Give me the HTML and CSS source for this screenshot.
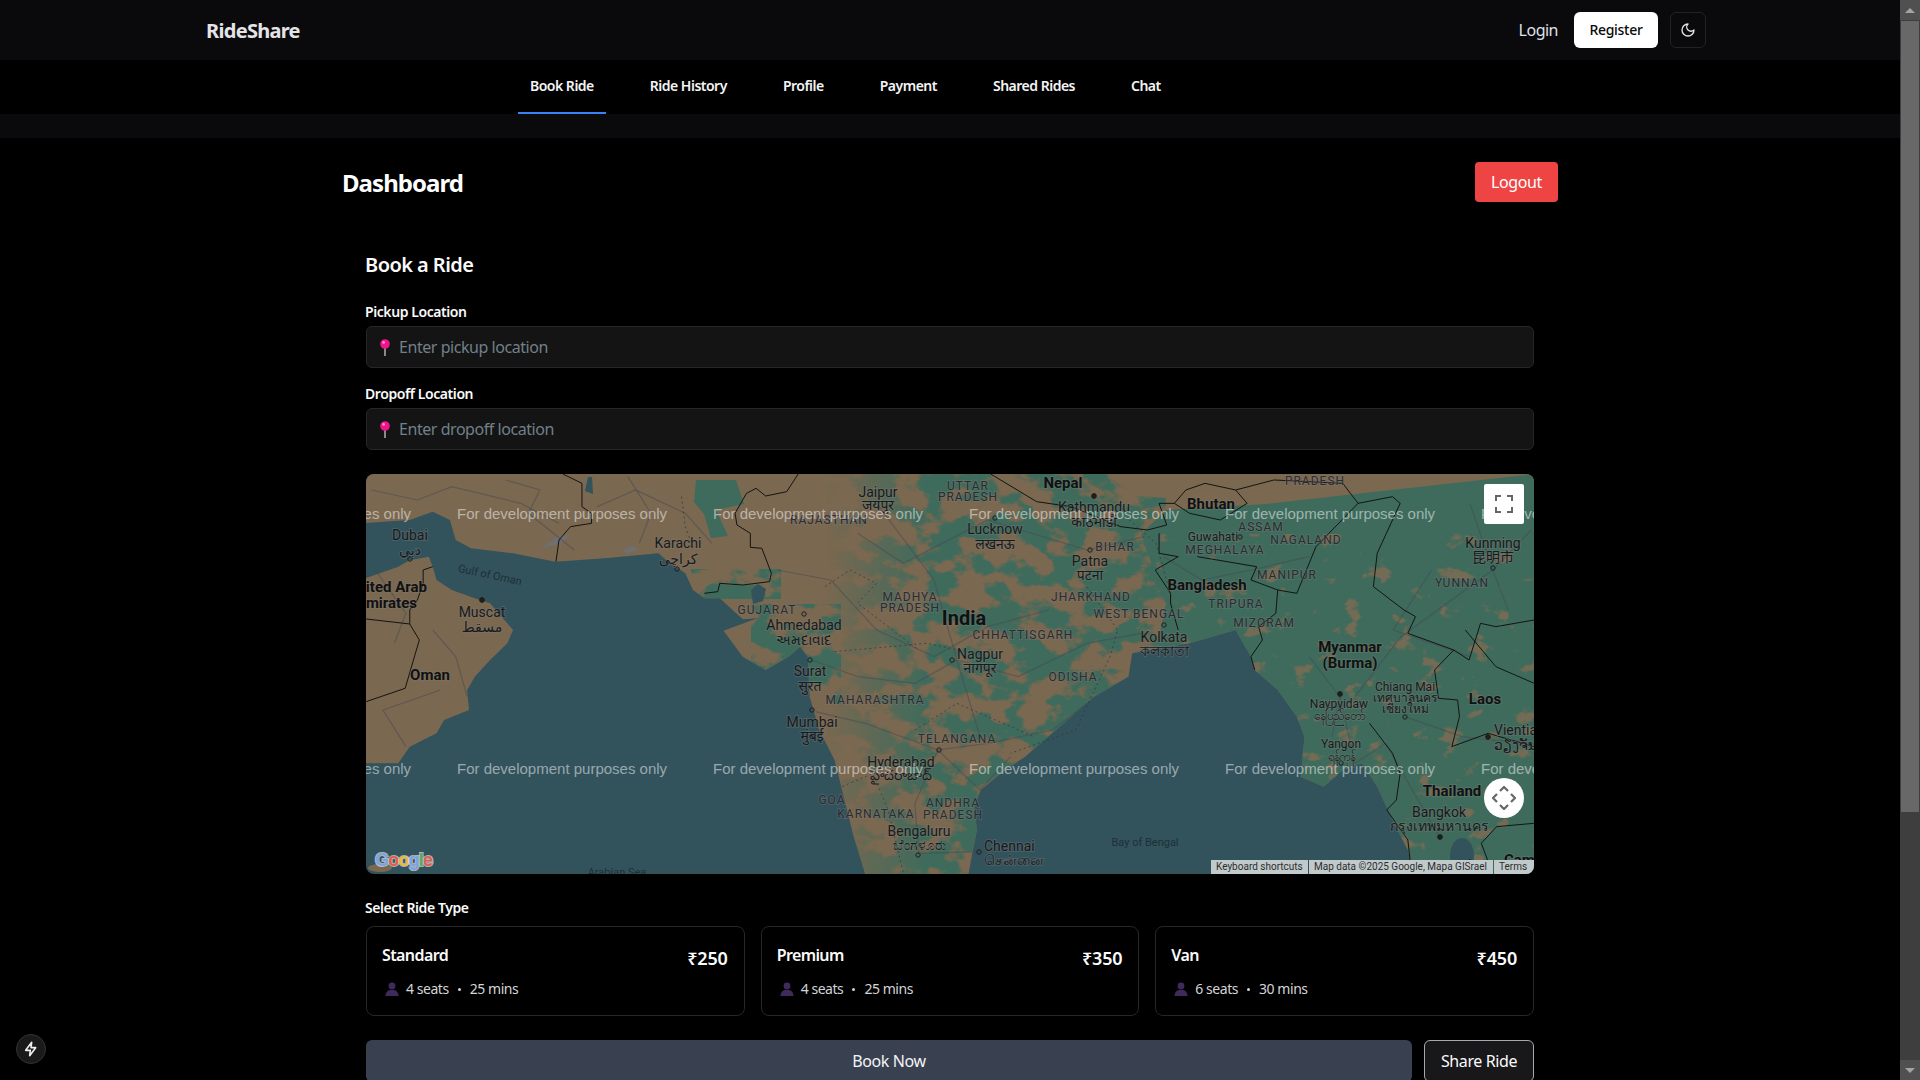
FILE: index.html
```html
<!DOCTYPE html>
<html lang="en">
<head>
    <meta charset="UTF-8">
    <meta name="viewport" content="width=device-width, initial-scale=1.0">
    <title>RideShare</title>
    <link rel="stylesheet" href="styles.css">
</head>
<body>
<div class="window">
    <div class="page">
        <header class="topbar">
            <span class="brand">RideShare</span>
            <div class="topbar-actions">
                <a class="login-link">Login</a>
                <button class="register-btn">Register</button>
                <button class="theme-btn">
                    <svg width="16" height="16" viewBox="0 0 24 24" fill="none" stroke="#e5e5e5" stroke-width="2" stroke-linecap="round" stroke-linejoin="round"><path d="M12 3a6 6 0 0 0 9 9 9 9 0 1 1-9-9Z"/></svg>
                </button>
            </div>
        </header>

        <nav class="tabs">
            <a class="tab active">Book Ride</a>
            <a class="tab">Ride History</a>
            <a class="tab">Profile</a>
            <a class="tab">Payment</a>
            <a class="tab">Shared Rides</a>
            <a class="tab">Chat</a>
        </nav>
        <div class="strip"></div>

        <main class="main">
            <div class="main-head">
                <h1>Dashboard</h1>
                <button class="logout-btn">Logout</button>
            </div>

            <section class="card">
                <h2>Book a Ride</h2>

                <label class="field-label">Pickup Location</label>
                <div class="input-box">
                    <svg class="pin" width="12" height="17" viewBox="0 0 12 17"><rect x="5.4" y="7" width="1.2" height="10" fill="#d8d8d8"/><circle cx="6" cy="5" r="4.8" fill="#f0148c"/><circle cx="4.6" cy="3.4" r="1.3" fill="#ff9ccf"/></svg>
                    <span class="placeholder">Enter pickup location</span>
                </div>

                <label class="field-label">Dropoff Location</label>
                <div class="input-box">
                    <svg class="pin" width="12" height="17" viewBox="0 0 12 17"><rect x="5.4" y="7" width="1.2" height="10" fill="#d8d8d8"/><circle cx="6" cy="5" r="4.8" fill="#f0148c"/><circle cx="4.6" cy="3.4" r="1.3" fill="#ff9ccf"/></svg>
                    <span class="placeholder">Enter dropoff location</span>
                </div>

                <div class="map">
                    <svg class="map-svg" width="1168" height="400" viewBox="0 0 1168 400">
                        <defs>
                            <path id="landShape" d="M0 0L0 160L130 150L190 125L235 150L250 210L290 235L400 250L510 275L640 265L780 250L800 270L850 310L870 360L900 385L940 385L1000 448L1040 445L1020 452L950 482L1000 560L1060 600L1120 560L1150 530L1170 560L1175 680L1200 780L1240 870L1290 1100L1320 1212L1590 1212L1600 1150L1612 1080L1605 1010L1622 960L1680 905L1738 860L1858 740L1918 680L2008 620L2018 550L2168 520L2288 480L2328 560L2338 600L2398 660L2448 740L2468 800L2458 920L2518 950L2568 900L2618 880L2658 950L2698 1050L2738 1140L2753 1212L3110 1212L3110 0Z M0 330L100 290L130 270L180 260L190 290L200 330L240 360L300 385L340 400L400 480L385 520L340 570L300 620L280 660L285 720L220 750L200 790L130 830L100 880L0 880Z"/>
                            <clipPath id="landClip"><use href="#landShape" transform="translate(-6,-4) scale(.3827,.3333)"/></clipPath>
                            <filter id="mottleGreen" x="0" y="0" width="100%" height="100%" color-interpolation-filters="sRGB">
                                <feTurbulence type="fractalNoise" baseFrequency=".032 .045" numOctaves="4" seed="7"/>
                                <feColorMatrix type="matrix" values="0 0 0 0 .243  0 0 0 0 .42  0 0 0 0 .36  9 0 0 0 -4"/>
                            </filter>
                            <filter id="mottleTan" x="0" y="0" width="100%" height="100%" color-interpolation-filters="sRGB">
                                <feTurbulence type="fractalNoise" baseFrequency=".04 .055" numOctaves="4" seed="12"/>
                                <feColorMatrix type="matrix" values="0 0 0 0 .45  0 0 0 0 .42  0 0 0 0 .33  10 0 0 0 -6.4"/>
                            </filter>
                            <linearGradient id="fadeIn" x1="0" x2="1" y1="0" y2="0">
                                <stop offset="0" stop-color="#000"/>
                                <stop offset=".3" stop-color="#fff"/>
                                <stop offset="1" stop-color="#fff"/>
                            </linearGradient>
                            <mask id="fadeMask" maskUnits="userSpaceOnUse" x="0" y="0" width="1168" height="400"><rect x="460" y="0" width="340" height="400" fill="url(#fadeIn)"/></mask>
                        </defs>

                        <rect width="1168" height="400" fill="#32525c"/>
                        <use href="#landShape" fill="#7a6850" transform="translate(-6,-4) scale(.3827,.3333)"/>

                        <g clip-path="url(#landClip)">
                            <g mask="url(#fadeMask)"><rect x="460" y="0" width="340" height="400" filter="url(#mottleGreen)"/></g>
                            <rect x="385" y="130" width="90" height="100" filter="url(#mottleGreen)"/>
                            <rect x="325" y="95" width="90" height="30" filter="url(#mottleGreen)"/>
                            <path d="M790 400L785 200L800 130L775 60L800 36L900 30L1168 0L1168 400Z" fill="#3e6b5c"/>
                            <path d="M330 6L370 6L378 30L350 36L362 62L345 64L338 40L328 28Z" fill="#3e6b5c"/>
                            <rect x="790" y="60" width="378" height="340" filter="url(#mottleTan)"/>
                            <path d="M740 0L930 0L900 12L850 14L800 24L770 22Z" fill="#7a6850"/>
                        </g>
                        <ellipse cx="1096" cy="382" rx="12" ry="18" fill="#32525c"/>
                        <ellipse cx="14" cy="394" rx="12" ry="4" fill="#7a6850"/>
                        <path d="M222 3l-3 14 8 3-1-17z" fill="#32525c"/>
                        <path d="M385 116l7-6 8 5-3 12-10 3z" fill="#32525c"/>
                        <path d="M175 75l15-12 14-2-8 8zM255 76l10-4 8 2-10 6z" fill="#6f6f70"/>

                        <!-- same scale as the crops, easier to trace -->
                        <g transform="translate(-6,-4) scale(.3827,.3333)" fill="none">
                            <g class="roads">
                                <path d="M30 60L150 90L240 50L420 100L520 160"/>
                                <path d="M620 110L720 60L850 130L920 220"/>
                                <path d="M380 30L470 60L440 130L560 240"/>
                                <path d="M700 20L760 130L730 220"/>
                                <path d="M40 300L120 430L90 520"/>
                                <path d="M190 480L250 560L280 680"/>
                                <path d="M210 660L60 720L120 830"/>
                                <path d="M1090 300L1230 330L1350 480L1500 560L1640 470L1800 420"/>
                                <path d="M1180 570L1300 620L1450 640L1560 570L1720 620L1900 520L2040 490"/>
                                <path d="M1190 725L1320 760L1510 840L1640 820L1810 780L1900 700"/>
                                <path d="M1510 840L1450 1000L1460 1150L1620 1145"/>
                                <path d="M1510 840L1620 960L1700 860"/>
                                <path d="M1300 190L1420 280L1640 150L1900 240L2050 200"/>
                                <path d="M1350 100L1500 330L1560 570L1620 800"/>
                                <path d="M2100 260L2200 330L2330 300L2480 260"/>
                                <path d="M2600 680L2720 500L2960 300L3060 180"/>
                                <path d="M2560 680L2600 880L2680 820L2820 1100"/>
                                <path d="M2730 740L2880 800L2950 810L3070 820"/>
                                <path d="M2800 300L2700 480L2900 560"/>
                                <path d="M2480 560L2560 680L2540 800"/>
                                <path d="M2900 100L2960 300L3000 420"/>
                            </g>
                            <g class="state-lines">
                                <path d="M840 80L850 170L870 230"/>
                                <path d="M1215 350L1280 300L1350 340L1300 400L1460 540"/>
                                <path d="M1240 545L1480 520L1650 560"/>
                                <path d="M1450 780L1560 700L1640 740L1760 800"/>
                                <path d="M1260 950L1340 910L1380 1020L1420 1210"/>
                                <path d="M1900 350L1980 480L1960 560L1870 780L1700 850"/>
                                <path d="M2000 140L2080 220L2120 380"/>
                            </g>
                            <g class="borders">
                                <path d="M530 12L580 40L580 110L605 130L605 160L550 170L520 210L512 275"/>
                                <path d="M1145 12L1115 65L1060 78L1035 55L1010 70L980 130L985 165L1020 190L1020 232L1050 235L1075 310L1070 335L1000 345L940 340L935 365L900 370"/>
                                <path d="M16 447L130 462L155 510L118 655L16 695"/>
                                <path d="M130 462L130 420L150 390L165 340L165 300L190 290"/>
                                <path d="M1648 12L1768 95L1858 110L1988 170L2058 180L2108 165L2088 100L2128 100"/>
                                <path d="M2158 60L2208 40L2288 60L2318 100L2248 150L2168 130L2128 100L2158 60Z"/>
                                <path d="M2288 60L2388 30L2568 40L2608 100L2698 80L2718 100L2658 250L2648 350L2728 420L2758 440L2738 490L2858 540L2898 570L2928 460L2968 470L3068 450"/>
                                <path d="M2088 190L2088 250L2138 260L2078 300L2118 370L2118 400L2138 480"/>
                                <path d="M2188 260L2343 290L2328 330L2398 360L2448 370L2498 230L2608 100"/>
                                <path d="M2398 360L2393 430L2348 470L2358 510L2328 560L2338 600"/>
                                <path d="M2638 760L2698 850L2718 910L2708 990L2683 1020L2738 1110L2748 1212"/>
                                <path d="M2858 540L2808 600L2818 685L2868 690L2873 740L2853 830L2948 790L3068 830"/>
                                <path d="M2888 480L2968 590L3068 640"/>
                                <path d="M3068 1060L2970 1070L2930 1120L2960 1212"/>
                            </g>
                        </g>

                        <g class="dots">
                            <circle cx="44" cy="85" r="2.2"/><circle cx="311" cy="95" r="2.2"/><circle cx="438" cy="140" r="2.2"/>
                            <circle cx="444" cy="186" r="2.2"/><circle cx="446" cy="236" r="2.2"/><circle cx="573" cy="276" r="2.2"/>
                            <circle cx="552" cy="381" r="2.2"/><circle cx="586" cy="186" r="2.2"/><circle cx="629" cy="44" r="2.2"/>
                            <circle cx="724" cy="76" r="2.2"/><circle cx="798" cy="151" r="2.2"/><circle cx="874" cy="63" r="2.2"/>
                            <circle cx="1039" cy="243" r="2.2"/><circle cx="1127" cy="94" r="2.2"/><circle cx="975" cy="289" r="2.2"/>
                            <circle cx="613" cy="378" r="2.2"/><circle cx="1104" cy="388" r="2.2"/>
                        </g>
                        <g class="capitals">
                            <circle cx="116" cy="126" r="2.4"/><circle cx="728" cy="22" r="2.4"/><circle cx="974" cy="220" r="2.4"/>
                            <circle cx="1122" cy="263" r="2.4"/><circle cx="1074" cy="363" r="2.4"/>
                        </g>

                        <g class="labels">
                            <text class="city" x="44" y="61">Dubai</text>
                            <text class="city" x="44" y="76">دبي</text>
                            <text class="country" x="61" y="113" text-anchor="end">United Arab</text>
                            <text class="country" x="51" y="129" text-anchor="end">Emirates</text>
                            <text class="city" x="116" y="138">Muscat</text>
                            <text class="city" x="116" y="153">مسقط</text>
                            <text class="country" x="64" y="201">Oman</text>
                            <text class="sea" x="124" y="101" transform="rotate(12 124 101)">Gulf of Oman</text>
                            <text class="city" x="312" y="69">Karachi</text>
                            <text class="city" x="312" y="85">کراچی</text>
                            <text class="city" x="512" y="18">Jaipur</text>
                            <text class="city" x="512" y="31">जयपुर</text>
                            <text class="state" x="463" y="46">RAJASTHAN</text>
                            <text class="state" x="401" y="136">GUJARAT</text>
                            <text class="city" x="438" y="151">Ahmedabad</text>
                            <text class="city" x="438" y="166">અમદાવાદ</text>
                            <text class="city" x="444" y="197">Surat</text>
                            <text class="city" x="444" y="212">सुरत</text>
                            <text class="state" x="509" y="226">MAHARASHTRA</text>
                            <text class="city" x="446" y="248">Mumbai</text>
                            <text class="city" x="446" y="262">मुंबई</text>
                            <text class="state" x="544" y="123">MADHYA</text>
                            <text class="state" x="544" y="134">PRADESH</text>
                            <text class="country big" x="598" y="144">India</text>
                            <text class="state" x="602" y="12">UTTAR</text>
                            <text class="state" x="602" y="23">PRADESH</text>
                            <text class="state" x="591" y="265">TELANGANA</text>
                            <text class="city" x="535" y="288">Hyderabad</text>
                            <text class="city" x="535" y="301">హైదరాబాద్</text>
                            <text class="state" x="466" y="326">GOA</text>
                            <text class="state" x="510" y="340">KARNATAKA</text>
                            <text class="state" x="587" y="329">ANDHRA</text>
                            <text class="state" x="587" y="341">PRADESH</text>
                            <text class="city" x="553" y="357">Bengaluru</text>
                            <text class="city" x="553" y="371">ಬೆಂಗಳೂರು</text>
                            <text class="sea" x="251" y="398">Arabian Sea</text>
                            <text class="country" x="697" y="9">Nepal</text>
                            <text class="city" x="728" y="33">Kathmandu</text>
                            <text class="city" x="728" y="48">काठमाडौं</text>
                            <text class="city" x="629" y="55">Lucknow</text>
                            <text class="city" x="629" y="70">लखनऊ</text>
                            <text class="country" x="845" y="30">Bhutan</text>
                            <text class="state" x="949" y="7">PRADESH</text>
                            <text class="state" x="895" y="53">ASSAM</text>
                            <text class="state" x="940" y="66">NAGALAND</text>
                            <text class="city small" x="847" y="63">Guwahati</text>
                            <text class="state" x="859" y="76">MEGHALAYA</text>
                            <text class="state" x="749" y="73">BIHAR</text>
                            <text class="city" x="724" y="87">Patna</text>
                            <text class="city" x="724" y="101">पटना</text>
                            <text class="country" x="841" y="111">Bangladesh</text>
                            <text class="state" x="921" y="101">MANIPUR</text>
                            <text class="state" x="725" y="123">JHARKHAND</text>
                            <text class="state" x="870" y="130">TRIPURA</text>
                            <text class="state" x="773" y="140">WEST BENGAL</text>
                            <text class="state" x="898" y="149">MIZORAM</text>
                            <text class="state" x="657" y="161">CHHATTISGARH</text>
                            <text class="city" x="798" y="163">Kolkata</text>
                            <text class="city" x="798" y="177">কলকাতা</text>
                            <text class="city" x="614" y="180">Nagpur</text>
                            <text class="city" x="614" y="194">नागपूर</text>
                            <text class="state" x="707" y="203">ODISHA</text>
                            <text class="country" x="984" y="173">Myanmar</text>
                            <text class="country" x="984" y="189">(Burma)</text>
                            <text class="city small" x="973" y="230">Naypyidaw</text>
                            <text class="city small" x="973" y="242">နေပြည်တော်</text>
                            <text class="city small" x="1039" y="213">Chiang Mai</text>
                            <text class="city small" x="1039" y="224">เทศบาลนคร</text>
                            <text class="city small" x="1039" y="235">เชียงใหม่</text>
                            <text class="city" x="1127" y="69">Kunming</text>
                            <text class="city" x="1127" y="83">昆明市</text>
                            <text class="state" x="1096" y="109">YUNNAN</text>
                            <text class="country" x="1119" y="225">Laos</text>
                            <text class="city" x="1128" y="256" text-anchor="start">Vientiane</text>
                            <text class="city" x="1128" y="271" text-anchor="start">ວຽງຈັນ</text>
                            <text class="city small" x="975" y="270">Yangon</text>
                            <text class="city small" x="975" y="283">ရန်ကုန်</text>
                            <text class="country" x="1086" y="317">Thailand</text>
                            <text class="city" x="1073" y="338">Bangkok</text>
                            <text class="city" x="1073" y="352">กรุงเทพมหานคร</text>
                            <text class="sea" x="779" y="368">Bay of Bengal</text>
                            <text class="city" x="618" y="372" text-anchor="start">Chennai</text>
                            <text class="city" x="618" y="386" text-anchor="start">சென்னை</text>
                            <text class="country" x="1138" y="386" text-anchor="start">Cambodia</text>
                        </g>

                        <g class="watermark">
                            <text x="-165" y="39">For development purposes only</text>
                            <text x="91" y="39">For development purposes only</text>
                            <text x="347" y="39">For development purposes only</text>
                            <text x="603" y="39">For development purposes only</text>
                            <text x="859" y="39">For development purposes only</text>
                            <text x="1115" y="39">For development purposes only</text>
                            <text x="-165" y="294">For development purposes only</text>
                            <text x="91" y="294">For development purposes only</text>
                            <text x="347" y="294">For development purposes only</text>
                            <text x="603" y="294">For development purposes only</text>
                            <text x="859" y="294">For development purposes only</text>
                            <text x="1115" y="294">For development purposes only</text>
                        </g>

                        <text class="google-logo" x="9" y="386"><tspan fill="#7ba3e6">G</tspan><tspan fill="#e0604f">o</tspan><tspan fill="#eab93a">o</tspan><tspan fill="#7ba3e6">g</tspan><tspan fill="#55a866">l</tspan><tspan fill="#e0604f">e</tspan></text>
                    </svg>

                    <button class="map-btn fullscreen">
                        <svg width="18" height="18" viewBox="0 0 18 18" fill="#666"><path d="M0 0h6v2H2v4H0zM12 0h6v6h-2V2h-4zM0 12h2v4h4v2H0zM16 12h2v6h-6v-2h4z"/></svg>
                    </button>
                    <button class="map-btn pan">
                        <svg width="24" height="24" viewBox="0 0 24 24" fill="none" stroke="#666" stroke-width="2.2"><path d="M8 5l4-4 4 4M8 19l4 4 4-4M5 8l-4 4 4 4M19 8l4 4-4 4"/></svg>
                    </button>
                    <div class="attribution">
                        <span class="attr-item attr-keys">Keyboard shortcuts</span>
                        <span class="attr-item attr-data">Map data ©2025 Google, Mapa GISrael</span>
                        <span class="attr-item attr-terms">Terms</span>
                    </div>
                </div>

                <label class="field-label ride-label">Select Ride Type</label>
                <div class="ride-grid">
                    <div class="ride">
                        <div class="ride-top"><span class="ride-name">Standard</span><span class="ride-price">₹250</span></div>
                        <div class="ride-meta">
                            <svg class="bust" width="14" height="14" viewBox="0 0 14 14"><circle cx="7" cy="4" r="3.4"/><path d="M0.5 14c0-4 2.5-5.6 4.5-6h4c2 .4 4.5 2 4.5 6z"/></svg>
                            <span>4 seats</span><span class="sep"></span><span>25 mins</span>
                        </div>
                    </div>
                    <div class="ride">
                        <div class="ride-top"><span class="ride-name">Premium</span><span class="ride-price">₹350</span></div>
                        <div class="ride-meta">
                            <svg class="bust" width="14" height="14" viewBox="0 0 14 14"><circle cx="7" cy="4" r="3.4"/><path d="M0.5 14c0-4 2.5-5.6 4.5-6h4c2 .4 4.5 2 4.5 6z"/></svg>
                            <span>4 seats</span><span class="sep"></span><span>25 mins</span>
                        </div>
                    </div>
                    <div class="ride">
                        <div class="ride-top"><span class="ride-name">Van</span><span class="ride-price">₹450</span></div>
                        <div class="ride-meta">
                            <svg class="bust" width="14" height="14" viewBox="0 0 14 14"><circle cx="7" cy="4" r="3.4"/><path d="M0.5 14c0-4 2.5-5.6 4.5-6h4c2 .4 4.5 2 4.5 6z"/></svg>
                            <span>6 seats</span><span class="sep"></span><span>30 mins</span>
                        </div>
                    </div>
                </div>

                <div class="book-row">
                    <button class="book-btn">Book Now</button>
                    <button class="share-btn">Share Ride</button>
                </div>
            </section>
        </main>

        <button class="dev-badge">
            <svg width="16" height="16" viewBox="0 0 24 24" fill="none" stroke="#eee" stroke-width="2.4" stroke-linejoin="round"><path d="M13 2L4 14h7l-1 8 9-12h-7z"/></svg>
        </button>
    </div>

    <div class="scrollbar">
        <div class="scroll-arrow"><span class="tri-up"></span></div>
        <div class="scroll-track"><div class="scroll-thumb"></div></div>
        <div class="scroll-arrow"><span class="tri-down"></span></div>
    </div>
</div>
</body>
</html>
```

FILE: styles.css
```css
* {
    box-sizing: border-box;
}
html, body {
    margin: 0;
    height: 100%;
    overflow: hidden;
}
body {
    background-color: #000;
    color: #fafafa;
    font-family: "Noto Sans", "Open Sans", sans-serif;
    font-size: 16px;
}
button {
    font-family: inherit;
    cursor: pointer;
}
.window {
    display: flex;
    height: 1080px;
}
.page {
    position: relative;
    flex: 1;
    min-width: 0;
    overflow: hidden;
}

/* top bar */
.topbar {
    display: flex;
    align-items: center;
    justify-content: space-between;
    height: 60px;
    padding: 0 194px 0 206px;
    background-color: #0a0a0c;
}
.brand {
    font-size: 20px;
    font-weight: 700;
    letter-spacing: -0.7px;
    color: #e4e4e7;
}
.topbar-actions {
    display: flex;
    align-items: center;
}
.login-link {
    margin-right: 16px;
    font-size: 16px;
    letter-spacing: -0.5px;
    color: #dfe3e8;
}
.register-btn {
    width: 84px;
    height: 36px;
    margin-right: 12px;
    padding: 0 0 2px;
    border: none;
    border-radius: 6px;
    background-color: #fff;
    color: #09090b;
    font-size: 14px;
    font-weight: 500;
    letter-spacing: -0.3px;
}
.theme-btn {
    display: flex;
    align-items: center;
    justify-content: center;
    width: 36px;
    height: 36px;
    border: 1px solid #222225;
    border-radius: 6px;
    background: transparent;
}

/* tabs */
.tabs {
    display: flex;
    gap: 32px;
    height: 54px;
    padding-left: 518px;
}
.tab {
    display: flex;
    align-items: center;
    padding: 0 12px 2px;
    border-bottom: 2px solid transparent;
    font-size: 14px;
    font-weight: 600;
    letter-spacing: -0.5px;
    color: #f4f4f5;
}
.tab.active {
    border-bottom-color: #3b82f6;
}
.strip {
    height: 24px;
    background-color: #0a0a0c;
}

/* main */
.main {
    width: 1216px;
    margin-left: 342px;
    padding-top: 24px;
}
.main-head {
    display: flex;
    align-items: center;
    justify-content: space-between;
    height: 40px;
    margin-bottom: 25px;
}
h1 {
    margin: 0;
    font-size: 24px;
    font-weight: 700;
    letter-spacing: -0.95px;
    color: #fff;
}
.logout-btn {
    width: 83px;
    height: 40px;
    border: none;
    border-radius: 4px;
    background-color: #ef4444;
    color: #fff;
    font-size: 16px;
    letter-spacing: -0.4px;
}
.card {
    padding: 24px;
}
h2 {
    margin: 0 0 23px -1px;
    font-size: 20px;
    font-weight: 600;
    line-height: 28px;
    letter-spacing: -0.55px;
    color: #fafafa;
}
.field-label {
    display: block;
    margin: 0 0 4px -1px;
    font-size: 14px;
    font-weight: 600;
    line-height: 20px;
    letter-spacing: -0.42px;
    color: #fafafa;
}
.input-box {
    display: flex;
    align-items: center;
    height: 42px;
    margin-bottom: 16px;
    padding-left: 12px;
    border: 1px solid #27272a;
    border-radius: 6px;
    background-color: #141414;
}
.input-box:nth-of-type(2) {
    margin-bottom: 24px;
}
.pin {
    margin-right: 8px;
}
.placeholder {
    font-size: 16px;
    letter-spacing: -0.45px;
    color: #71808a;
}

/* map */
.map {
    position: relative;
    height: 400px;
    margin-bottom: 24px;
    border-radius: 8px;
    overflow: hidden;
}
.map-svg {
    display: block;
}
.roads path {
    stroke: rgba(70, 72, 84, 0.5);
    stroke-width: 1.2;
    vector-effect: non-scaling-stroke;
}
.state-lines path {
    stroke: rgba(50, 50, 60, 0.7);
    stroke-width: 1;
    stroke-dasharray: 2 3;
    vector-effect: non-scaling-stroke;
}
.borders path {
    stroke: #141414;
    stroke-width: 1;
    vector-effect: non-scaling-stroke;
}
.dots circle {
    fill: none;
    stroke: #1e1e1e;
    stroke-width: 1;
}
.capitals circle {
    fill: #1e1e1e;
    stroke: #1e1e1e;
    stroke-width: 1;
}
.labels text {
    font-family: Roboto, "Noto Sans", "DejaVu Sans", "Noto Sans CJK SC", sans-serif;
    dominant-baseline: central;
    text-anchor: middle;
    paint-order: stroke;
    stroke: rgba(125, 125, 125, 0.35);
    stroke-width: 2px;
}
.labels .city {
    font-size: 14px;
    fill: #1a1a1a;
}
.labels .city.small {
    font-size: 12px;
}
.labels .country {
    font-size: 15px;
    font-weight: 700;
    fill: #111;
}
.labels .country.big {
    font-size: 20px;
}
.labels .state {
    font-size: 12px;
    letter-spacing: 1px;
    fill: #2c2c30;
}
.labels .sea {
    font-size: 11px;
    fill: #1e3036;
    stroke: none;
}
.labels text[text-anchor="start"] {
    text-anchor: start;
}
.labels text[text-anchor="end"] {
    text-anchor: end;
}
.watermark text {
    font-family: "Liberation Sans", Arial, sans-serif;
    font-size: 15px;
    fill: rgba(255, 255, 255, 0.5);
    dominant-baseline: central;
}
.google-logo {
    font-family: "Liberation Sans", Arial, sans-serif;
    font-size: 18px;
    font-weight: 700;
    letter-spacing: -0.8px;
    dominant-baseline: central;
    paint-order: stroke;
    stroke: rgba(225, 225, 225, 0.7);
    stroke-width: 2px;
}
.map-btn {
    position: absolute;
    right: 10px;
    display: flex;
    align-items: center;
    justify-content: center;
    width: 40px;
    height: 40px;
    border: none;
    background-color: #fff;
    padding: 0;
}
.fullscreen {
    top: 10px;
    border-radius: 2px;
}
.pan {
    top: 304px;
    border-radius: 50%;
}
.attribution {
    position: absolute;
    right: 0;
    bottom: 0;
    display: flex;
    gap: 1px;
    height: 14px;
    font-family: Roboto, sans-serif;
    font-size: 10px;
    line-height: 14px;
    color: #2c2c2c;
}
.attr-item {
    padding-left: 5px;
    background-color: #c1cacb;
    white-space: nowrap;
}
.attr-keys {
    width: 97px;
}
.attr-data {
    width: 184px;
}
.attr-terms {
    width: 40px;
}

/* ride types */
.ride-label {
    margin-bottom: 8px;
}
.ride-grid {
    display: grid;
    grid-template-columns: repeat(3, 1fr);
    gap: 16px;
    margin-bottom: 24px;
}
.ride {
    height: 90px;
    padding: 16px;
    border: 1px solid #27272a;
    border-radius: 8px;
}
.ride-top {
    display: flex;
    align-items: flex-start;
    justify-content: space-between;
}
.ride-name {
    margin-left: -1px;
    font-size: 16px;
    font-weight: 600;
    line-height: 24px;
    letter-spacing: -0.6px;
}
.ride-price {
    margin-top: 1px;
    font-size: 18px;
    font-weight: 600;
    line-height: 28px;
    letter-spacing: -0.2px;
}
.ride-meta {
    display: flex;
    align-items: center;
    margin-top: 7px;
    padding-left: 2px;
    font-size: 14px;
    line-height: 20px;
    letter-spacing: -0.45px;
    color: #d4d4d8;
}
.bust {
    margin-right: 7px;
    fill: #3f2a5c;
}
.sep {
    width: 3px;
    height: 3px;
    margin: 0 9px;
    border-radius: 50%;
    background-color: #d4d4d8;
}
.book-row {
    display: flex;
    gap: 12px;
}
.book-btn {
    flex: 1;
    height: 42px;
    border: none;
    border-radius: 6px;
    background-color: #394150;
    color: #f4f4f5;
    font-size: 16px;
    letter-spacing: -0.4px;
}
.share-btn {
    width: 110px;
    height: 42px;
    border: 1px solid #a8a8a8;
    border-radius: 6px;
    background-color: #18181b;
    color: #fafafa;
    font-size: 16px;
    letter-spacing: -0.4px;
}

/* dev tools badge */
.dev-badge {
    position: absolute;
    left: 16px;
    top: 1034px;
    display: flex;
    align-items: center;
    justify-content: center;
    width: 30px;
    height: 30px;
    padding: 0;
    border: 1px solid #333;
    border-radius: 50%;
    background-color: #1a1a1a;
}

/* drawn scrollbar, page is taller than the window */
.scrollbar {
    display: flex;
    flex-direction: column;
    width: 20px;
    background-color: #3e3e3e;
}
.scroll-arrow {
    display: flex;
    align-items: center;
    justify-content: center;
    height: 20px;
    background-color: #505050;
}
.tri-up, .tri-down {
    width: 0;
    height: 0;
    border-left: 5px solid transparent;
    border-right: 5px solid transparent;
}
.tri-up {
    border-bottom: 5px solid #a3a3a3;
}
.tri-down {
    border-top: 5px solid #a3a3a3;
}
.scroll-track {
    flex: 1;
    padding: 1px 1px 0;
}
.scroll-thumb {
    height: 791px;
    background-color: #686868;
}
```
